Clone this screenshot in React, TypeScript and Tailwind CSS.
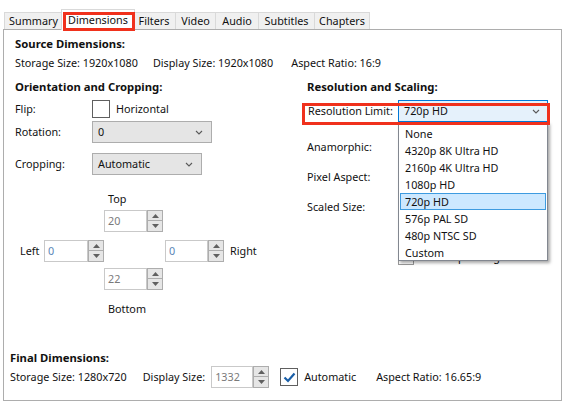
import React from "react";

const TABS: { label: string; width: string }[] = [
  { label: "Summary", width: "w-[59px]" },
  { label: "Dimensions", width: "w-[74px]" },
  { label: "Filters", width: "w-[44px]" },
  { label: "Video", width: "w-[41px]" },
  { label: "Audio", width: "w-[44px]" },
  { label: "Subtitles", width: "w-[57px]" },
  { label: "Chapters", width: "w-[56px]" },
];

const LIMITS = [
  "None",
  "4320p 8K Ultra HD",
  "2160p 4K Ultra HD",
  "1080p HD",
  "720p HD",
  "576p PAL SD",
  "480p NTSC SD",
  "Custom",
];

function Chevron() {
  return (
    <svg width="8" height="5" viewBox="0 0 8 5" className="shrink-0">
      <path d="M1 1 L4 4 L7 1" fill="none" stroke="#5a5a5a" strokeWidth="1.1" />
    </svg>
  );
}

function Select({ value, width }: { value: string; width: string }) {
  return (
    <div
      className={`flex h-[22px] ${width} items-center justify-between border border-[#adadad] bg-[#e5e5e5] pl-[5px] pr-[8px]`}
    >
      <span>{value}</span>
      <Chevron />
    </div>
  );
}

function Arrow({ up }: { up?: boolean }) {
  return (
    <svg width="7" height="4" viewBox="0 0 7 4">
      <path d={up ? "M0 4 L3.5 0 L7 4 Z" : "M0 0 L3.5 4 L7 0 Z"} fill="#606060" />
    </svg>
  );
}

function Spinner({
  value,
  box = "w-[44px]",
  tone = "text-[#7a7a7a]",
}: {
  value: string;
  box?: string;
  tone?: string;
}) {
  return (
    <div className="flex h-[22px] shrink-0">
      <div
        className={`flex ${box} items-center border border-[#c9c9c9] bg-white pl-[3px] ${tone}`}
      >
        {value}
      </div>
      <div className="flex w-[16px] flex-col">
        <div className="flex h-[11px] items-center justify-center border border-[#adadad] bg-[#e6e6e6]">
          <Arrow up />
        </div>
        <div className="-mt-px flex h-[12px] items-center justify-center border border-[#adadad] bg-[#e6e6e6]">
          <Arrow />
        </div>
      </div>
    </div>
  );
}

function Checkbox({ checked }: { checked?: boolean }) {
  return (
    <div className="flex h-[18px] w-[18px] shrink-0 items-center justify-center border border-[#5f5f5f] bg-white">
      {checked ? (
        <svg width="13" height="11" viewBox="0 0 13 11">
          <path d="M1.5 5.5 L5 9 L11.5 1.5" fill="none" stroke="#1a5fa8" strokeWidth="2.2" />
        </svg>
      ) : null}
    </div>
  );
}

export default function App() {
  return (
    <div
      className="relative h-[404px] w-[562px] overflow-hidden whitespace-nowrap bg-white text-[10.8px] leading-[16px] text-[#111]"
      style={{ fontFamily: '"Noto Sans", "Open Sans", sans-serif' }}
    >
      {/* tab strip */}
      <div className="flex h-[29px] items-end pl-[4px]">
        {TABS.map((t) =>
          t.label === "Dimensions" ? (
            <div
              key={t.label}
              className={`relative z-10 -mx-[2px] -mb-px flex h-[21px] ${t.width} items-start justify-center border border-b-0 border-[#d9d9d9] bg-white pt-[2px]`}
            >
              {t.label}
            </div>
          ) : (
            <div
              key={t.label}
              className={`-ml-px flex h-[17px] ${t.width} items-center justify-center border border-b-0 border-[#d9d9d9] bg-[#f0f0f0] first:ml-0`}
            >
              {t.label}
            </div>
          ),
        )}
      </div>

      {/* panel */}
      <div className="ml-[3px] flex h-[372px] w-[559px] flex-col border border-[#adadad]">
        <div className="pl-[11px] pt-[6px]">
          <div className="text-[11.3px] font-bold">Source Dimensions:</div>
          <div className="mt-[3px] flex">
            <span>Storage Size: 1920x1080</span>
            <span className="ml-[15px]">Display Size: 1920x1080</span>
            <span className="ml-[18px]">Aspect Ratio: 16:9</span>
          </div>

          <div className="mt-[8px] flex">
            {/* orientation and cropping */}
            <div className="w-[292px] shrink-0">
              <div className="text-[11.3px] font-bold">Orientation and Cropping:</div>
              <div className="mt-[5px] flex h-[18px] items-center">
                <span className="w-[77px]">Flip:</span>
                <Checkbox />
                <span className="ml-[6px]">Horizontal</span>
              </div>
              <div className="mt-[3px] flex h-[22px] items-center">
                <span className="w-[77px]">Rotation:</span>
                <Select value="0" width="w-[120px]" />
              </div>
              <div className="mt-[10px] flex h-[22px] items-center">
                <span className="w-[77px]">Cropping:</span>
                <Select value="Automatic" width="w-[110px]" />
              </div>

              <div className="ml-[93px] mt-[16px]">Top</div>
              <div className="ml-[89px] mt-[3px]">
                <Spinner value="20" box="w-[43px]" />
              </div>
              <div className="mt-[8px] flex items-center">
                <span className="ml-[5px] w-[24px]">Left</span>
                <Spinner value="0" tone="text-[#5b86b8]" />
                <div className="w-[61px]" />
                <Spinner value="0" box="w-[43px]" tone="text-[#5b86b8]" />
                <span className="ml-[6px]">Right</span>
              </div>
              <div className="ml-[89px] mt-[6px]">
                <Spinner value="22" box="w-[43px]" />
              </div>
              <div className="ml-[93px] mt-[11px]">Bottom</div>
            </div>

            {/* resolution and scaling */}
            <div className="flex-1">
              <div className="text-[11.3px] font-bold">Resolution and Scaling:</div>
              <div className="mt-[5px] flex h-[22px] items-center">
                <span className="w-[91px] pl-px">Resolution Limit:</span>
                <div className="flex h-[22px] w-[150px] items-center justify-between border border-[#0078d7] bg-[#e5f1fb] pl-[5px] pr-[7px]">
                  <span>720p HD</span>
                  <Chevron />
                </div>
              </div>
              <div className="mt-[17px]">Anamorphic:</div>
              <div className="mt-[14px]">Pixel Aspect:</div>
              <div className="mt-[14px]">Scaled Size:</div>
              <div className="ml-[91px] mt-[34px] flex h-[16px] items-center">
                <div className="h-[16px] w-[16px] border border-[#9a9a9a] bg-white" />
                <span className="ml-[6px]">Allow Upscaling</span>
              </div>
            </div>
          </div>
        </div>

        {/* final dimensions */}
        <div className="mt-auto pb-[12px] pl-[6px]">
          <div className="text-[11.3px] font-bold">Final Dimensions:</div>
          <div className="flex h-[22px] items-center">
            <span>Storage Size: 1280x720</span>
            <span className="ml-[16px]">Display Size:</span>
            <div className="ml-[6px]">
              <Spinner value="1332" box="w-[42px]" />
            </div>
            <div className="ml-[11px]">
              <Checkbox checked />
            </div>
            <span className="ml-[6px]">Automatic</span>
            <span className="ml-[20px]">Aspect Ratio: 16.65:9</span>
          </div>
        </div>
      </div>

      {/* open dropdown list */}
      <div className="absolute left-[398px] top-[122px] z-20 h-[139px] w-[150px] border border-[#828790] bg-white pt-[2px] shadow-[2px_2px_3px_rgba(0,0,0,0.35)]">
        {LIMITS.map((l) =>
          l === "720p HD" ? (
            <div
              key={l}
              className="mx-px flex h-[17px] items-center border border-[#3d9be0] bg-[#cce8ff] pl-[4px]"
            >
              {l}
            </div>
          ) : (
            <div key={l} className="flex h-[17px] items-center pl-[6px]">
              {l}
            </div>
          ),
        )}
      </div>

      {/* annotation highlights */}
      <div className="pointer-events-none absolute left-[63px] top-[12px] z-30 h-[19px] w-[72px] border-[3px] border-[#f0311c]" />
      <div className="pointer-events-none absolute left-[302px] top-[103px] z-30 h-[22px] w-[248px] border-[3px] border-[#f0311c]" />
    </div>
  );
}
